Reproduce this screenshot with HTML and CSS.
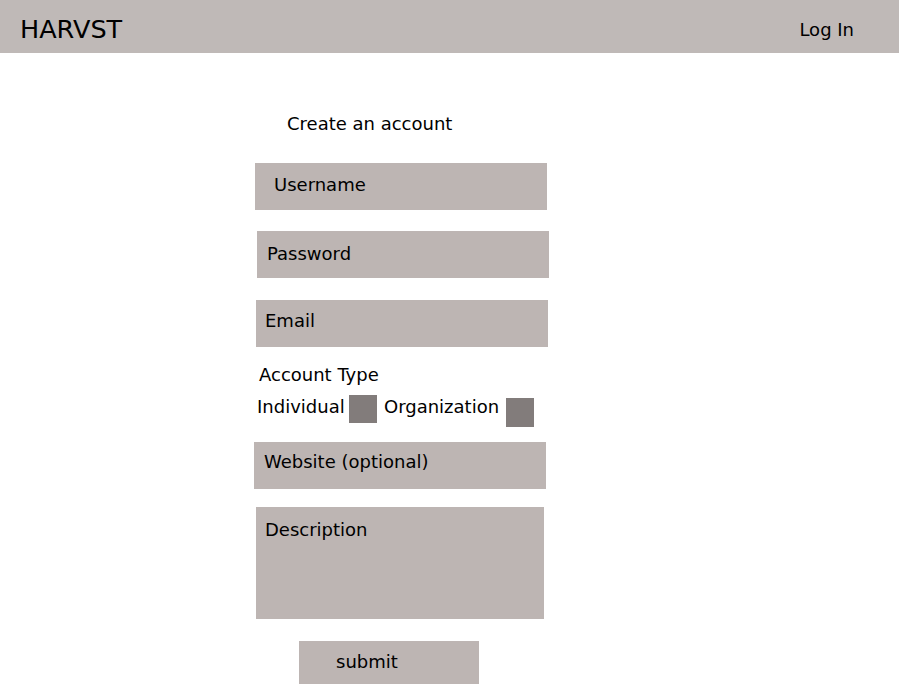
FILE: index.html
```html
<!DOCTYPE html>
<html>
<head>
<meta charset="utf-8">
<link rel="stylesheet" href="styles.css">
</head>
<body>
<header class="topbar">
  <div class="brand">HARVST</div>
  <div class="login">Log In</div>
</header>
<main class="form">
  <div class="title">Create an account</div>
  <div class="field f-user">Username</div>
  <div class="field f-pass">Password</div>
  <div class="field f-email">Email</div>
  <div class="acct-label">Account Type</div>
  <div class="acct-row">
    <span class="opt opt-ind">Individual</span>
    <span class="box box-ind"></span>
    <span class="opt opt-org">Organization</span>
    <span class="box box-org"></span>
  </div>
  <div class="field f-web">Website (optional)</div>
  <div class="field f-desc">Description</div>
  <div class="submit">submit</div>
</main>
</body>
</html>
```
FILE: styles.css
```css
html, body {
  margin: 0;
  padding: 0;
  background: #ffffff;
}
body {
  font-family: "DejaVu Sans", Verdana, sans-serif;
  color: #000;
  font-size: 18px;
  line-height: 20px;
  width: 900px;
}
.topbar {
  width: 899px;
  height: 53px;
  background: #bfb9b7;
  display: flex;
  align-items: center;
  justify-content: space-between;
  box-sizing: border-box;
  padding: 0 45px 0 20px;
}
.brand {
  font-size: 25.5px;
  line-height: 30px;
  margin-top: 5px;
}
.login {
  font-size: 18px;
  margin-top: 7px;
}
.form {
  display: flex;
  flex-direction: column;
  align-items: flex-start;
}
.title {
  margin: 61px 0 0 287px;
}
.field {
  width: 292px;
  height: 47px;
  background: #bdb5b3;
  box-sizing: border-box;
}
.f-user { margin: 29px 0 0 255px; padding: 12px 0 0 19px; }
.f-pass { margin: 21px 0 0 257px; padding: 13px 0 0 10px; }
.f-email { margin: 22px 0 0 256px; padding: 11px 0 0 9px; }
.acct-label { margin: 18px 0 0 259px; }
.acct-row {
  display: flex;
  align-items: flex-start;
  margin: 10px 0 0 257px;
}
.opt { margin-top: 2px; }
.box {
  width: 28px;
  height: 28px;
  background: #827c7b;
  flex: none;
}
.opt-ind { width: 88px; }
.box-ind { margin-left: 4px; }
.opt-org { margin-left: 7px; width: 122px; }
.box-org { margin: 3px 0 0 0; height: 29px; }
.f-web { margin: 15px 0 0 254px; padding: 10px 0 0 10px; }
.f-desc { width: 288px; height: 112px; margin: 18px 0 0 256px; padding: 13px 0 0 9px; }
.submit {
  width: 180px;
  height: 43px;
  background: #bdb5b3;
  box-sizing: border-box;
  margin: 22px 0 0 299px;
  padding: 11px 0 0 37px;
}
```
